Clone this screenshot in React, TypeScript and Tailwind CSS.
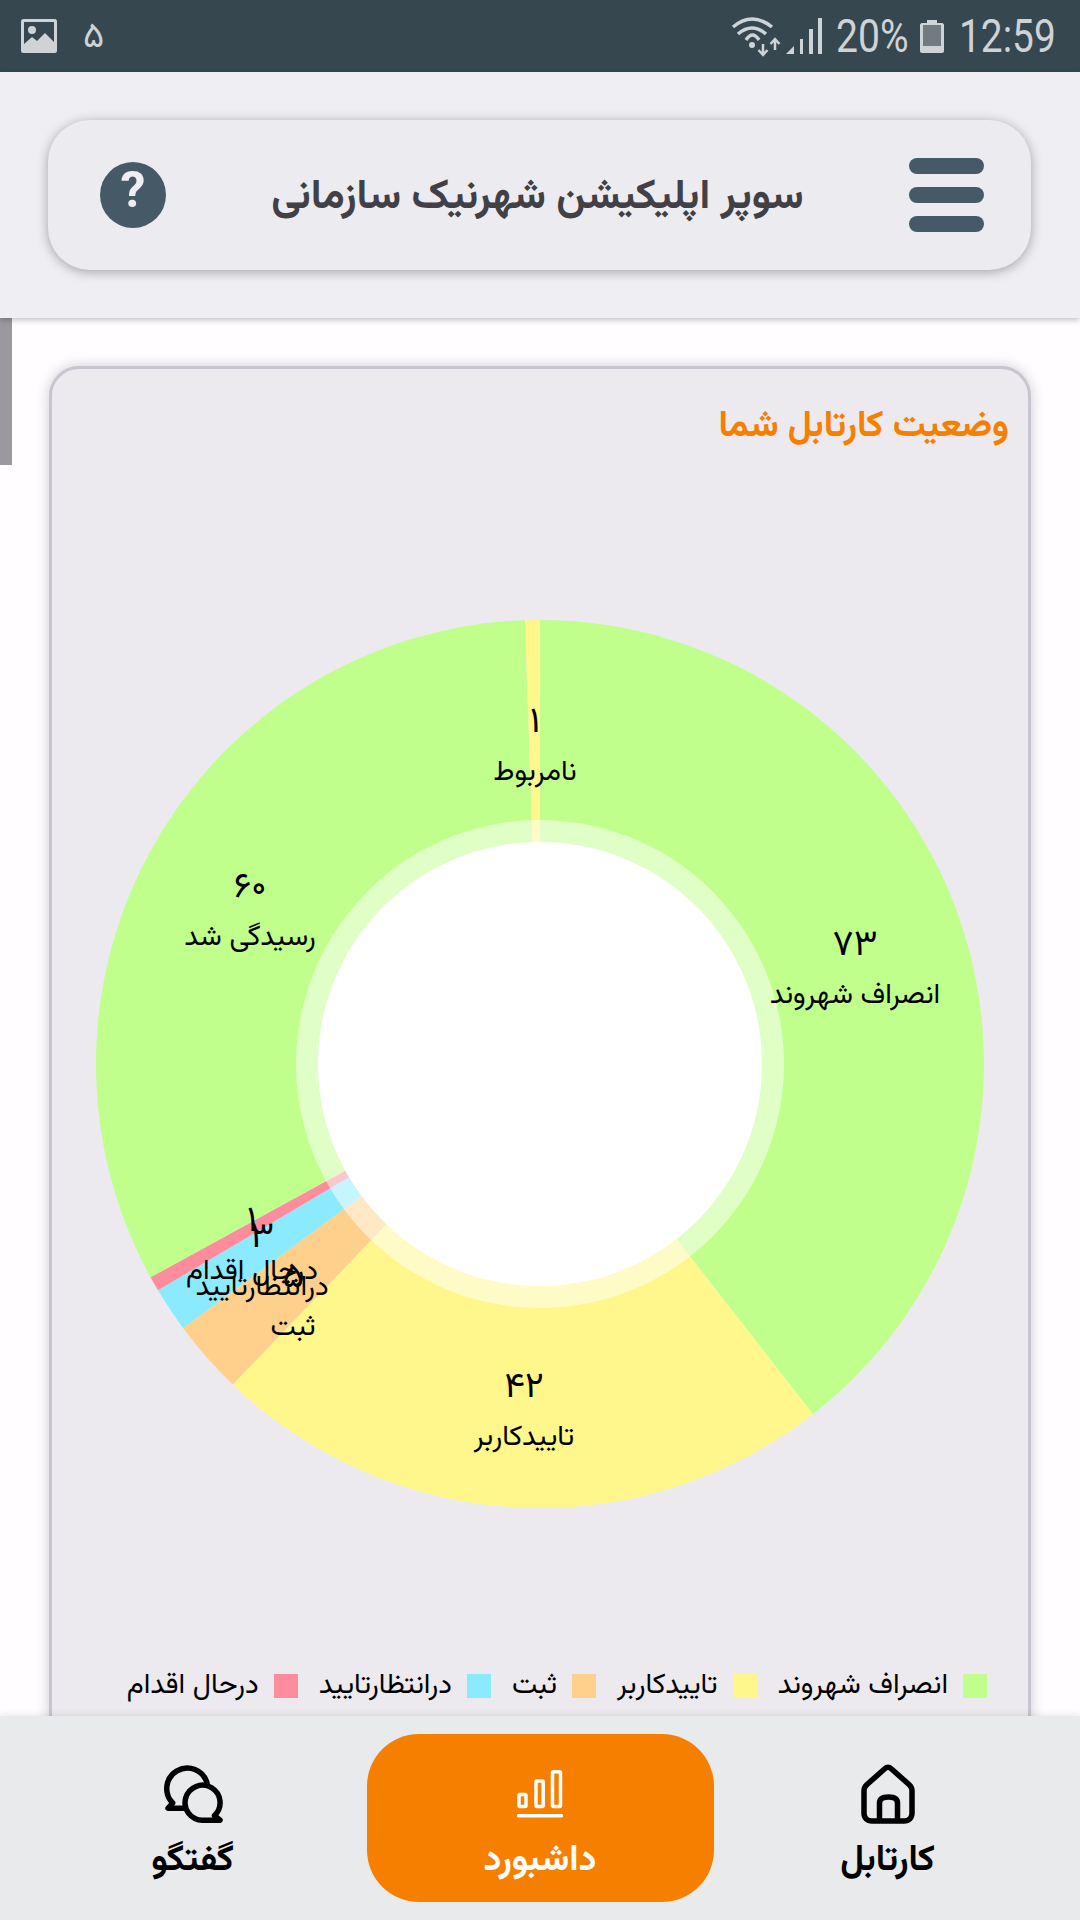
const font = "font-['Vazirmatn','Noto_Sans',sans-serif]";

const cx = 488;
const cy = 594;
const R = 444;

const slices = [
  { value: 73, color: "#c0ff8c" },
  { value: 42, color: "#fff78c" },
  { value: 5, color: "#ffd08c" },
  { value: 3, color: "#8ceaff" },
  { value: 1, color: "#ff8c9d" },
  { value: 60, color: "#c0ff8c" },
  { value: 1, color: "#fff78c" },
];

const labels = [
  { num: "۷۳", text: "انصراف شهروند", x: 803, y: 485 },
  { num: "۴۲", text: "تاییدکاربر", x: 472, y: 927 },
  { num: "۵", text: "ثبت", x: 241, y: 817 },
  { num: "۳", text: "درانتظارتایید", x: 210, y: 777 },
  { num: "۱", text: "درحال اقدام", x: 200, y: 761 },
  { num: "۶۰", text: "رسیدگی شد", x: 198, y: 427 },
  { num: "۱", text: "نامربوط", x: 483, y: 262 },
];

const legend = [
  { color: "#c0ff8c", text: "انصراف شهروند" },
  { color: "#fff78c", text: "تاییدکاربر" },
  { color: "#ffd08c", text: "ثبت" },
  { color: "#8ceaff", text: "درانتظارتایید" },
  { color: "#ff8c9d", text: "درحال اقدام" },
];

function slicePath(from: number, to: number) {
  const a = (from * Math.PI) / 180;
  const b = (to * Math.PI) / 180;
  const large = to - from > 180 ? 1 : 0;
  const x1 = cx + R * Math.sin(a);
  const y1 = cy - R * Math.cos(a);
  const x2 = cx + R * Math.sin(b);
  const y2 = cy - R * Math.cos(b);
  return `M${cx} ${cy}L${x1} ${y1}A${R} ${R} 0 ${large} 1 ${x2} ${y2}Z`;
}

function DonutChart() {
  const total = slices.reduce((sum, s) => sum + s.value, 0);
  let angle = 0;
  return (
    <svg viewBox="0 0 976 1186" className="block h-[1186px] w-[976px]">
      {slices.map((s, i) => {
        const from = angle;
        angle += (s.value / total) * 360;
        return <path key={i} d={slicePath(from, angle)} fill={s.color} />;
      })}
      <circle cx={cx} cy={cy} r={244} fill="#ffffff" fillOpacity={0.5} />
      <circle cx={cx} cy={cy} r={222} fill="#ffffff" />
      {labels.map((l, i) => (
        <g key={i} textAnchor="middle" fill="#000000">
          <text x={l.x} y={l.y} fontSize={36}>{l.num}</text>
          <text x={l.x} y={l.y + 48} fontSize={28.5}>{l.text}</text>
        </g>
      ))}
    </svg>
  );
}

function StatusIcons() {
  return (
    <div className="flex items-center text-[#ced3d6]">
      <svg width="50" height="40" viewBox="0 0 50 40" fill="none" stroke="currentColor" className="mt-[2px]">
        <path d="M2 10Q21 -6 41 10" strokeWidth="3.5" />
        <path d="M7 17Q21 5 35 17" strokeWidth="3.5" />
        <path d="M15 23Q21.5 13 28 23" strokeWidth="3.5" />
        <circle cx="21" cy="28" r="3" fill="currentColor" stroke="none" />
        <path d="M32 27V37M27.5 33L32 38L36.5 33" strokeWidth="2.5" />
        <path d="M44 33V23M39.5 27L44 22L48.5 27" strokeWidth="2.5" />
      </svg>
      <svg width="36" height="36" viewBox="0 0 36 36" fill="currentColor" className="ml-[5px]">
        <path d="M0 36L8 28V36Z" />
        <rect x="14" y="21" width="3" height="15" />
        <rect x="23" y="11" width="4" height="25" />
        <rect x="32" y="0" width="4" height="36" />
      </svg>
      <span className="ml-[14px] w-[71px] origin-left scale-x-[0.85] whitespace-nowrap font-['Roboto',sans-serif] text-[46px] leading-none">20%</span>
      <svg width="24" height="33" viewBox="0 0 24 33" className="ml-[13px]">
        <path d="M7 0H17V3H22C23 3 24 4 24 5V31C24 32 23 33 22 33H2C1 33 0 32 0 31V5C0 4 1 3 2 3H7Z" fill="currentColor" />
        <rect x="3" y="5" width="18" height="21" fill="#707c80" />
      </svg>
      <span className="ml-[15px] w-[96px] origin-left scale-x-[0.845] whitespace-nowrap font-['Roboto',sans-serif] text-[46px] leading-none">12:59</span>
    </div>
  );
}

function HomeIcon() {
  return (
    <svg width="54" height="60" viewBox="0 0 54 60" fill="none" stroke="#000" strokeWidth="5.5" strokeLinejoin="round">
      <path d="M24 4.5C25.8 2.8 28.2 2.8 30 4.5L48 20.5C50 22.3 51 24 51 26.5V49C51 54 48 57 43 57H11C6 57 3 54 3 49V26.5C3 24 4 22.3 6 20.5Z" />
      <path d="M18.5 57V39C18.5 35 21.5 33 27.5 33C33.5 33 36.5 35 36.5 39V57" />
    </svg>
  );
}

function ChatIcon() {
  return (
    <svg width="60" height="60" viewBox="0 0 60 60" fill="none" stroke="#000" strokeWidth="5.5" strokeLinejoin="round" strokeLinecap="round">
      <path d="M44 19A20.5 20.5 0 1 0 9.7 39L5 44.3H20" />
      <path d="M39.7 56.2A17.5 17.5 0 1 1 51.5 51.5L57 56.2Z" />
    </svg>
  );
}

function ChartIcon() {
  return (
    <svg width="46" height="48" viewBox="0 0 46 48" fill="none" stroke="#fff" strokeWidth="3.5">
      <rect x="2" y="24.5" width="7" height="12" rx="1" />
      <rect x="19" y="11" width="7.2" height="25.5" rx="1" />
      <rect x="35.5" y="1.75" width="8" height="34.75" rx="1" />
      <path d="M1.5 45.7H44.5" strokeLinecap="round" />
    </svg>
  );
}

function NavItem({ label, icon, active }: { label: string; icon: React.ReactNode; active?: boolean }) {
  return (
    <div
      className={
        active
          ? "flex h-[168px] w-[347px] flex-col items-center rounded-[52px] bg-[#f77f00] pt-[30px] text-white"
          : "flex h-[168px] w-[347px] flex-col items-center pt-[30px] text-black"
      }
    >
      <div className="flex h-[60px] items-center justify-center">{icon}</div>
      <span className="mt-[15px] text-[36px] font-bold leading-[44px]">{label}</span>
    </div>
  );
}

export default function App() {
  return (
    <div className={`flex h-[1920px] w-[1080px] flex-col overflow-hidden bg-[#fffdff] ${font}`}>
      {/* status bar */}
      <div className="flex h-[72px] shrink-0 items-center justify-between bg-[#37474f] pl-[21px] pr-[25px] text-[#ced3d6]">
        <div className="flex items-center gap-[26px]">
          <svg width="36" height="34" viewBox="0 0 36 34">
            <rect width="36" height="34" rx="2.5" fill="currentColor" />
            <rect x="3" y="3" width="30" height="27" fill="#37474f" />
            <circle cx="11" cy="11" r="4" fill="currentColor" />
            <path d="M3 25L11 18L16 22L24 14L33 23V30H3Z" fill="currentColor" />
          </svg>
          <span className="mt-[4px] text-[36px] leading-none">۵</span>
        </div>
        <StatusIcons />
      </div>

      {/* header */}
      <div className="relative z-10 h-[246px] shrink-0 bg-[#efeef3] px-[48px] pt-[48px] shadow-[0_2px_6px_rgba(0,0,0,0.25)]">
        <div className="flex h-[150px] w-[983px] items-center justify-between rounded-[42px] bg-[#ecebef] pl-[52px] pr-[47px] shadow-[0_2px_12px_rgba(0,0,0,0.32)]">
          <div className="flex h-[66px] w-[66px] items-center justify-center rounded-full bg-[#455a66] text-[50px] font-bold text-[#efeef3]">?</div>
          <div className="mt-[6px] text-[41.5px] font-bold leading-none text-[#414046]" dir="rtl">سوپر اپلیکیشن شهرنیک سازمانی</div>
          <div className="flex w-[75px] flex-col gap-[13px]">
            <div className="h-[16px] rounded-full bg-[#455a66]" />
            <div className="h-[16px] rounded-full bg-[#455a66]" />
            <div className="h-[16px] rounded-full bg-[#455a66]" />
          </div>
        </div>
      </div>

      {/* content */}
      <div className="relative min-h-0 flex-1 overflow-hidden px-[49px] pt-[48px]">
        <div className="absolute left-0 top-0 h-[147px] w-[12px] bg-[#9c98a0]" />
        <div className="h-[1400px] w-[982px] rounded-[30px] border-[3px] border-[#c9c5d0] bg-[#eceaef] shadow-[0_0_14px_rgba(0,0,0,0.2)]">
          <div className="h-[101px] pr-[19px] pt-[37px] text-[36.5px] font-bold leading-[44px] text-[#f77f00]" dir="rtl">وضعیت کارتابل شما</div>
          <DonutChart />
          <div className="mt-[18px] flex h-[24px] items-center gap-[21px] pr-[41px]" dir="rtl">
            {legend.map((l) => (
              <div key={l.text} className="flex items-center gap-[15px]">
                <div className="h-[24px] w-[24px]" style={{ backgroundColor: l.color }} />
                <span className="text-[28.5px] leading-none text-black">{l.text}</span>
              </div>
            ))}
          </div>
        </div>
      </div>

      {/* bottom nav */}
      <div className="relative z-10 flex h-[204px] shrink-0 items-center justify-between bg-[#e9eaec] pl-[19px] pr-[19px] shadow-[0_-2px_6px_rgba(0,0,0,0.08)]">
        <NavItem label="گفتگو" icon={<ChatIcon />} />
        <NavItem label="داشبورد" icon={<ChartIcon />} active />
        <NavItem label="کارتابل" icon={<HomeIcon />} />
      </div>
    </div>
  );
}
